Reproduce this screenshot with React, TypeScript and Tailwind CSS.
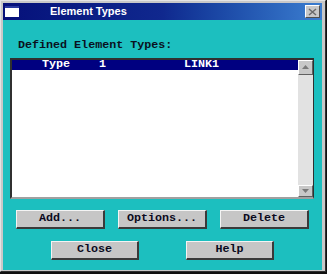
import React from "react";

const mono = { fontFamily: '"Liberation Mono", "DejaVu Sans Mono", monospace' };

function Btn({ label, w }: { label: string; w: string }) {
  return (
    <button
      className={`${w} h-[19px] bg-[#c6c6c6] border-t border-l border-t-[#f4f4f4] border-l-[#f4f4f4] border-b-2 border-r-2 border-b-[#3a3a3a] border-r-[#3a3a3a] text-[11.7px] font-bold text-[#0a0a20] leading-none flex items-center justify-center`}
      style={mono}
    >
      {label}
    </button>
  );
}

export default function App() {
  return (
    <div className="w-[327px] h-[274px] bg-[#101010]">
      <div className="w-[326px] h-[272px] bg-[#c8c8c8] border-t border-l border-t-[#e4e4e4] border-l-[#e4e4e4] border-b border-r border-b-[#303030] border-r-[#303030] pt-[2px] pl-[2px] pr-[3px] pb-[1px] flex flex-col">
        {/* title bar */}
        <div className="h-[17px] flex items-center bg-gradient-to-r from-[#06107a] via-[#10288e] to-[#3c7ed0] px-[2px]">
          <div className="w-[14px] h-[11px] bg-white border-t-2 border-t-[#2a3aa0]" />
          <span
            className="ml-[31px] text-[11px] font-bold text-white leading-none"
            style={{ fontFamily: '"Liberation Sans", Arial, sans-serif' }}
          >
            Element Types
          </span>
          <div className="ml-auto w-[15px] h-[13px] bg-[#c8c8c8] border-t border-l border-white border-b border-r border-b-[#505050] border-r-[#505050] flex items-center justify-center">
            <svg width="9" height="8" viewBox="0 0 9 8">
              <path d="M1 1 L8 7 M8 1 L1 7" stroke="#6a6a6a" strokeWidth="1.5" />
            </svg>
          </div>
        </div>
        {/* body */}
        <div className="flex-1 bg-[#1cbfbf] flex flex-col pt-[20px] px-[7px]">
          <div className="text-[11.7px] font-bold text-[#0a1020] leading-none pl-[8px]" style={mono}>
            Defined Element Types:
          </div>
          <div className="mt-[6px] h-[141px] w-[304px] bg-white border-t-2 border-l-2 border-t-[#303030] border-l-[#303030] border-b-2 border-r border-b-[#a0a0a0] border-r-[#303030] flex">
            <div className="flex-1">
              <div
                className="h-[10px] bg-[#000080] text-white text-[11.7px] font-bold leading-none flex items-center relative"
                style={mono}
              >
                <span className="absolute left-[30px]">Type</span>
                <span className="absolute left-[87px]">1</span>
                <span className="absolute left-[172px]">LINK1</span>
              </div>
            </div>
            <div className="w-[15px] bg-[#e2e2e2] flex flex-col justify-between">
              <div className="h-[15px] bg-[#c8c8c8] border-t border-l border-white border-b border-r border-b-[#606060] border-r-[#606060] flex items-center justify-center">
                <svg width="7" height="4" viewBox="0 0 7 4">
                  <path d="M0 4 L3.5 0 L7 4 Z" fill="#7a7a7a" />
                </svg>
              </div>
              <div className="h-[12px] bg-[#c8c8c8] border-t border-l border-white border-b border-r border-b-[#606060] border-r-[#606060] flex items-center justify-center">
                <svg width="7" height="4" viewBox="0 0 7 4">
                  <path d="M0 0 L3.5 4 L7 0 Z" fill="#7a7a7a" />
                </svg>
              </div>
            </div>
          </div>
          <div className="mt-[11px] flex justify-center gap-[13px]">
            <Btn label="Add..." w="w-[89px]" />
            <Btn label="Options..." w="w-[89px]" />
            <Btn label="Delete" w="w-[89px]" />
          </div>
          <div className="mt-[12px] flex justify-center gap-[47px]">
            <Btn label="Close" w="w-[88px]" />
            <Btn label="Help" w="w-[88px]" />
          </div>
        </div>
      </div>
    </div>
  );
}
